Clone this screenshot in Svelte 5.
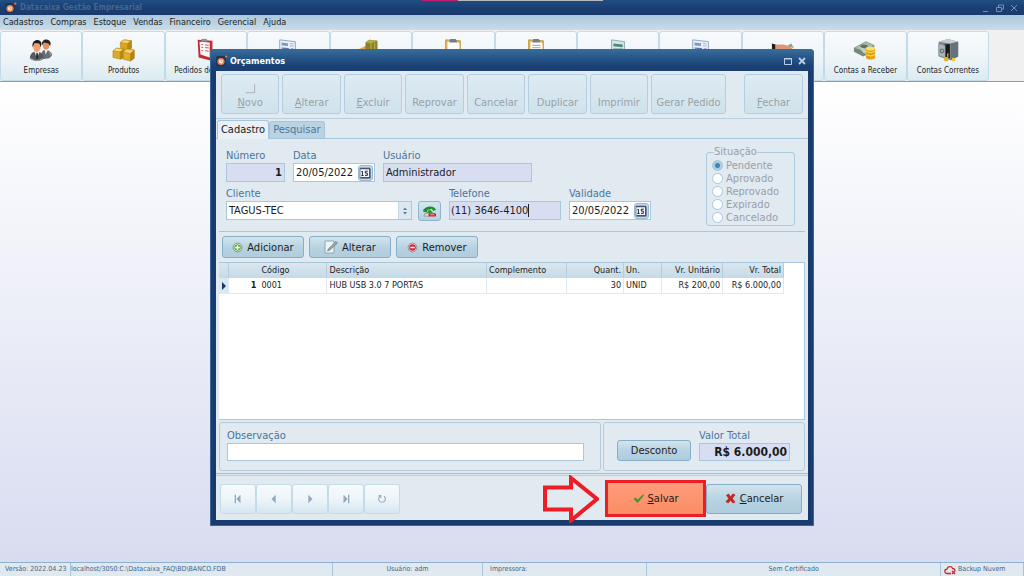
<script lang="ts">
	type Shortcut = { label: string; icon: string; covered?: boolean };

	const menus = ['Cadastros', 'Compras', 'Estoque', 'Vendas', 'Financeiro', 'Gerencial', 'Ajuda'];

	const shortcuts: Shortcut[] = [
		{ label: 'Empresas', icon: 'people' },
		{ label: 'Produtos', icon: 'boxes' },
		{ label: 'Pedidos de Venda', icon: 'redclip' },
		{ label: 'Orçamentos', icon: 'sheet', covered: true },
		{ label: 'Estoque', icon: 'stock', covered: true },
		{ label: 'Compras', icon: 'clip', covered: true },
		{ label: 'Pedidos', icon: 'cliplines', covered: true },
		{ label: 'Notas', icon: 'greensheet', covered: true },
		{ label: 'Relatórios', icon: 'sheet', covered: true },
		{ label: 'Contas a Pagar', icon: 'hand', covered: true },
		{ label: 'Contas a Receber', icon: 'money' },
		{ label: 'Contas Correntes', icon: 'safe' }
	];

	// key = underlined access letter at the start of the caption
	const actions = [
		{ key: 'N', text: 'ovo' },
		{ key: 'A', text: 'lterar' },
		{ key: 'E', text: 'xcluir' },
		{ key: '', text: 'Reprovar' },
		{ key: '', text: 'Cancelar' },
		{ key: '', text: 'Duplicar' },
		{ key: '', text: 'Imprimir' },
		{ key: '', text: 'Gerar Pedido', wide: true }
	];

	const statuses = ['Pendente', 'Aprovado', 'Reprovado', 'Expirado', 'Cancelado'];

	const items = [
		{ n: 1, codigo: '0001', descricao: 'HUB USB 3.0 7 PORTAS', complemento: '', quant: 30, un: 'UNID', unitario: 'R$ 200,00', total: 'R$ 6.000,00' }
	];

	const navButtons = [
		{ label: 'Primeiro', d: 'M2 1h1.6v10H2zM9 1v10L4 6z' },
		{ label: 'Anterior', d: 'M8 1v10L3 6z' },
		{ label: 'Próximo', d: 'M4 1v10l5-5z' },
		{ label: 'Último', d: 'M3 1v10l5-5zM8.400 1H10v10H8.400z' }
	];

	let activeTab = $state('Cadastro');
	let status = $state('Pendente');
	let data = $state('20/05/2022');
	let validade = $state('20/05/2022');
	let telefone = $state('(11) 3646-4100');
	let observacao = $state('');
</script>

{#snippet logo()}
	<svg class="logo" viewBox="0 0 12 12" aria-hidden="true">
		<rect x="0" y="1" width="10" height="10" rx="2" fill="#1c3658" />
		<circle cx="5" cy="6.5" r="3.6" fill="#ef8050" />
		<circle cx="5" cy="6.5" r="2" fill="#fff3ea" />
		<path d="M5 5v1.6h1.2" stroke="#e0703c" stroke-width=".7" fill="none" />
		<circle cx="10.2" cy="1.6" r="1.2" fill="#f07028" />
	</svg>
{/snippet}

{#snippet calendar()}
	<button class="cal" aria-label="Abrir calendário">
		<svg viewBox="0 0 12 12" aria-hidden="true">
			<path d="M1 1h10v10H1z" fill="#f6f8ff" stroke="#7d86a0" />
			<path d="M1 1h10v1.200H1zM10 2h1.500v9.500H10zM1.500 10h10v1.500h-10z" fill="#4a5272" />
			<path d="M3.400 4.200v4.200M2.400 8.500h2.200M2.400 4.600h1M8.800 4.200H6.300v1.900h2v2.300H6" fill="none" stroke="#20242e" />
		</svg>
	</button>
{/snippet}

{#snippet icon(name: string)}
	<svg class="icon" viewBox="0 0 26 26" aria-hidden="true">
		{#if name === 'people'}
			<path d="M13 20c0-5 2-7 5-7s7 2 7 6l-3 3-8 1z" fill="#6a6d73" />
			<path d="M17 13l1 5 2.500-5z" fill="#eee" />
			<ellipse cx="18.500" cy="7.500" rx="3.500" ry="5" fill="#e8905c" />
			<path d="M14 8c-1-8 9-8 9.500-2l-.6 3-1.700-3-5-1z" fill="#26221f" />
			<path d="M1 22c0-5 3-7 7-7s8 2 8 7c-3 4-12 4-15 0z" fill="#55585f" />
			<path d="M6 15l2.500 7 3-7z" fill="#f4f4f4" />
			<path d="M8 16h1.400l.6 5-1.300 2-1-2z" fill="#222" />
			<ellipse cx="8.500" cy="9.500" rx="4" ry="5.700" fill="#f0a070" />
			<path d="M4 10C2 1 13 0 13.500 6l-.7 4-1.600-4-5.200-.7z" fill="#1f1c1a" />
			<path d="M2 22q6 5 13 0M22 15l2 4" stroke="#a4a8ae" fill="none" />
		{:else if name === 'boxes'}
			<g stroke="#a87a10" stroke-width=".5">
				<path d="M9 5l4-3 8 1v8l-4 2-8-1z" fill="#d9a520" />
				<path d="M9 5l8 1 4-3-8-1z" fill="#f6d468" />
				<path d="M17 6v7l4-2V3z" fill="#bd8712" />
				<path d="M1 14l4-3 8 1v9l-4 2-8-2z" fill="#dcaa25" />
				<path d="M1 14l8 1 4-3-8-1z" fill="#f8db78" />
				<path d="M9 15v8l4-2v-9z" fill="#bd8712" />
				<path d="M12 15l4-3 8 1v9l-4 3-8-2z" fill="#dfae2a" />
				<path d="M12 15l8 2 4-4-8-1z" fill="#f6d468" />
				<path d="M20 17v8l4-3v-9z" fill="#b98310" />
			</g>
		{:else if name === 'redclip'}
			<path d="M4 2l16 1v22L5 21z" fill="#c22b35" />
			<path d="M6 4l11 1v16L7 18z" fill="#fbf7f7" />
			<path d="M8 7l2 0m2 .5l4 .3M8 10l2 .3m2 0l4 .5M8 13.500l2 .3m2 0l4 .5" stroke="#b8505a" />
			<path d="M8 1h6v3H8z" fill="#8a8f98" />
		{:else if name === 'sheet'}
			<path d="M4 2l17 2v20H4z" fill="#e9f0f8" stroke="#8da3bd" />
			<path d="M6 5l7 .8v3L6 8z" fill="#7b9bc8" />
			<path d="M15 6l4 .5M15 8.500l4 .3" stroke="#9db2cc" />
			<path d="M6 11l8 .5M16 12h3M6 14h13M6 17h13" stroke="#5877a8" stroke-width="1.500" />
		{:else if name === 'stock'}
			<path d="M0 12l8-4v12z" fill="#e5a24a" />
			<path d="M7 5l4-3 9 1v18l-8 2-5-3z" fill="#8b8128" />
			<path d="M7 5l6 1 7-3-9-1z" fill="#b3aa50" />
			<path d="M13 6v16M17 5v16" stroke="#c4b850" />
			<path d="M20 12l5 2v6h-5z" fill="#d99236" />
		{:else if name === 'clip' || name === 'cliplines'}
			<path d="M5 2l16 1v21H5z" fill="#e0b34e" stroke="#c79a3c" />
			<path d="M7 4h11l2 2v16H7z" fill="#fff" />
			<path d="M10 1h6l2 4H9z" fill="#777e88" />
			{#if name === 'cliplines'}
				<path d="M9 8h9M9 10.500h9M9 13h9" stroke="#9aa1aa" />
			{/if}
		{:else if name === 'greensheet'}
			<path d="M6 2l14 2v20H6z" fill="#d7e6ea" stroke="#8ba5ad" />
			<path d="M8 6l10 1v3L8 9z" fill="#4b857c" />
			<path d="M8 12h10M8 15h10" stroke="#3f7f73" />
		{:else if name === 'hand'}
			<path d="M1 6l4 1v7H1z" fill="#201d1c" />
			<path d="M5 7l8 0 8 2 4 5-6-1-14 1z" fill="#d99778" />
			<path d="M18 8l4-2 3 5z" fill="#8aa583" />
		{:else if name === 'money'}
			<path d="M1 11l13-7 9 4v6l-12 6-10-5z" fill="#75897c" />
			<path d="M1 11l13-7 9 4-12 6z" fill="#aabbac" stroke="#64776b" stroke-width=".5" />
			<ellipse cx="12" cy="9" rx="4" ry="2" fill="#5c7464" />
			<path d="M6 9l9 4v5l-4-2z" fill="#c6d0c4" />
			<path d="M14 12h10v9c0 3-10 3-10 0z" fill="#e0a210" />
			<ellipse cx="19" cy="11.500" rx="5" ry="2.300" fill="#fbe067" />
			<path d="M14 14.500q5 3 10 0M14 18q5 3 10 0" stroke="#fce46e" fill="none" />
		{:else}
			<path d="M3 4l10-3 11 3v16l-8 4-13-4z" fill="#7d888e" />
			<path d="M3 4l10-3 11 3-8 2z" fill="#c3ccd0" />
			<path d="M16 6l8-2v16l-8 4z" fill="#66727a" />
			<path d="M9 7l6-.5V22l-6-2z" fill="#16181a" />
			<path d="M3 6l7 2v14l-7-3z" fill="#aab5ba" stroke="#6a757b" stroke-width=".6" />
			<circle cx="6.500" cy="14" r="2" fill="none" stroke="#505a60" />
			<circle cx="11" cy="23" r="2.500" fill="#eab420" />
			<circle cx="19" cy="23.500" r="2" fill="#f4c93c" />
			<path d="M12 17l1.500-1v5H12z" fill="#d7a321" />
		{/if}
	</svg>
{/snippet}

<div class="app">
	<header class="titlebar">
		{@render logo()}
		<span class="app-title">Datacaixa Gestão Empresarial</span>
		<div class="win-controls">
			<button aria-label="Minimizar"><svg viewBox="0 0 10 10"><path d="M2 8.500h5" /></svg></button>
			<button aria-label="Restaurar"><svg viewBox="0 0 10 10"><path d="M3.500 4V2h5v4H7M1.500 4.500h5v4h-5z" /></svg></button>
			<button aria-label="Fechar programa"><svg viewBox="0 0 10 10"><path d="M2 2l6 6M8 2L2 8" /></svg></button>
		</div>
	</header>

	<nav class="menubar">
		{#each menus as menu}
			<button>{menu}</button>
		{/each}
	</nav>

	<div class="shortcuts">
		{#each shortcuts as s}
			<button class="shortcut" aria-label={s.label}>
				{@render icon(s.icon)}
				{#if !s.covered}<span>{s.label}</span>{/if}
			</button>
		{/each}
	</div>

	<main class="desktop"></main>

	<footer class="statusbar">
		<span class="version">Versão: 2022.04.23</span>
		<span class="path">localhost/3050:C:\Datacaixa_FAQ\BD\BANCO.FDB</span>
		<span class="user">Usuário: adm</span>
		<span class="printer">Impressora:</span>
		<span class="cert">Sem Certificado</span>
		<span class="backup">
			<svg viewBox="0 0 12 10" aria-hidden="true">
				<path d="M7 8.500H3a2.200 2.200 0 0 1 0-4.400 3 3 0 0 1 5.700-.6 2.300 2.300 0 0 1 2.300 2.500" />
				<path d="M8 6l3 3M11 6L8 9" />
			</svg>
			Backup Nuvem
		</span>
	</footer>

	<section class="dialog" aria-label="Orçamentos">
		<header class="dialog-title">
			{@render logo()}
			<h1>Orçamentos</h1>
			<div class="win-controls">
				<button aria-label="Maximizar janela"><svg viewBox="0 0 10 10"><path d="M1.500 2.500h7v6h-7zM1 3h8" /></svg></button>
				<button aria-label="Fechar janela"><svg viewBox="0 0 10 10"><path d="M2 2l6 6M8 2L2 8" stroke-width="1.800" /></svg></button>
			</div>
		</header>

		<div class="dialog-body">
			<div class="actions">
				<div class="action-group">
					{#each actions as a}
						<button disabled class:wide={a.wide}>
							{#if a.text === 'ovo'}
								<svg class="page" viewBox="0 0 12 12" aria-hidden="true"><path d="M10.500 1v9.500H1" /></svg>
							{/if}
							<span><u>{a.key}</u>{a.text}</span>
						</button>
					{/each}
				</div>
				<button disabled class="close"><span><u>F</u>echar</span></button>
			</div>

			<div class="tabs" role="tablist">
				{#each ['Cadastro', 'Pesquisar'] as tab}
					<button role="tab" aria-selected={activeTab === tab} class:active={activeTab === tab} onclick={() => (activeTab = tab)}>{tab}</button>
				{/each}
			</div>

			<div class="page-body">
				<div class="form">
					<div class="fields">
						<div class="row">
							<div class="field numero">
								<label for="numero">Número</label>
								<input id="numero" class="locked bold" value="1" readonly />
							</div>
							<div class="field date">
								<label for="data">Data</label>
								<div class="combo">
									<input id="data" bind:value={data} />
									{@render calendar()}
								</div>
							</div>
							<div class="field usuario">
								<label for="usuario">Usuário</label>
								<input id="usuario" class="locked" value="Administrador" readonly />
							</div>
						</div>
						<div class="row">
							<div class="field cliente">
								<label for="cliente">Cliente</label>
								<div class="combo">
									<select id="cliente">
										<option>TAGUS-TEC</option>
									</select>
									<span class="spin" aria-hidden="true">
										<svg viewBox="0 0 6 8"><path d="M1 3l2-2.500L5 3zM1 5l2 2.500L5 5z" /></svg>
									</span>
								</div>
							</div>
							<button class="phone" aria-label="Ligar para o cliente">
								<svg viewBox="0 0 16 14" aria-hidden="true">
									<path d="M1 7c0-5 11-8 14-2l-3 1.500L10.500 4 6 5 5 8z" fill="#1f8c2c" />
									<path d="M8 4l4 4.500H5z" fill="#2f9c38" />
									<path d="M3 9h5v3H2z" fill="#d7dde0" stroke="#69777d" stroke-width=".6" />
									<rect x="7" y="9" width="8" height="3.500" rx="1" fill="#d3262c" />
									<path d="M9 10.500h4" stroke="#ffc0c0" stroke-width=".8" />
								</svg>
							</button>
							<div class="field telefone">
								<label for="telefone">Telefone</label>
								<div class="combo locked">
									<input id="telefone" bind:value={telefone} />
									<i class="caret"></i>
								</div>
							</div>
							<div class="field date">
								<label for="validade">Validade</label>
								<div class="combo">
									<input id="validade" bind:value={validade} />
									{@render calendar()}
								</div>
							</div>
						</div>
					</div>

					<fieldset class="situacao" disabled>
						<legend>Situação</legend>
						{#each statuses as s}
							<label><input type="radio" name="situacao" value={s} bind:group={status} />{s}</label>
						{/each}
					</fieldset>
				</div>

				<div class="detail">
					<div class="item-actions">
						<button class="btn">
							<svg viewBox="0 0 12 12" aria-hidden="true">
								<circle cx="6" cy="6" r="4.800" fill="#eef7ea" stroke="#7a8a80" />
								<circle cx="6" cy="6" r="3.600" fill="#5fa851" />
								<path d="M6 3.500v5M3.500 6h5" stroke="#fff" stroke-width="1.500" />
							</svg>
							Adicionar
						</button>
						<button class="btn">
							<svg class="pencil" viewBox="0 0 14 14" aria-hidden="true">
								<path d="M1 1h9v12H1z" fill="#eef3f6" stroke="#91a4b0" />
								<path d="M12 1.500l1.500 1.500L6 10l-2.500 1L4.600 8.600z" fill="#9ba5aa" stroke="#6e7a80" stroke-width=".7" />
							</svg>
							Alterar
						</button>
						<button class="btn">
							<svg viewBox="0 0 12 12" aria-hidden="true">
								<circle cx="6" cy="6" r="4.800" fill="#f5dfe2" stroke="#92858c" />
								<circle cx="6" cy="6" r="3.600" fill="#cf2438" />
								<path d="M3.700 6h4.600" stroke="#fff" stroke-width="1.700" />
							</svg>
							Remover
						</button>
					</div>

					<div class="grid">
						<table>
							<colgroup>
								<col class="c-mark" /><col class="c-n" /><col class="c-cod" /><col class="c-desc" /><col class="c-comp" />
								<col class="c-qt" /><col class="c-un" /><col class="c-unit" /><col class="c-tot" />
							</colgroup>
							<thead>
								<tr>
									<th></th>
									<th class="open"></th>
									<th>Código</th>
									<th>Descrição</th>
									<th>Complemento</th>
									<th class="num">Quant.</th>
									<th>Un.</th>
									<th class="num">Vr. Unitário</th>
									<th class="num">Vr. Total</th>
								</tr>
							</thead>
							<tbody>
								{#each items as item}
									<tr>
										<td class="mark"><svg viewBox="0 0 5 8" aria-hidden="true"><path d="M1 0v8l4-4z" /></svg></td>
										<td class="num bold open">{item.n}</td>
										<td>{item.codigo}</td>
										<td>{item.descricao}</td>
										<td>{item.complemento}</td>
										<td class="num">{item.quant}</td>
										<td>{item.un}</td>
										<td class="num">{item.unitario}</td>
										<td class="num">{item.total}</td>
									</tr>
								{/each}
							</tbody>
						</table>
					</div>

					<div class="totals">
						<div class="panel obs">
							<div class="field">
								<label for="observacao">Observação</label>
								<input id="observacao" bind:value={observacao} />
							</div>
						</div>
						<div class="panel sum">
							<button class="btn">Desconto</button>
							<div class="field valor">
								<label for="total">Valor Total</label>
								<input id="total" class="locked bold" value="R$ 6.000,00" readonly />
							</div>
						</div>
					</div>
				</div>
			</div>

			<footer class="footer">
				<div class="nav">
					{#each navButtons as b}
						<button aria-label={b.label}><svg viewBox="0 0 12 12"><path d={b.d} /></svg></button>
					{/each}
					<button aria-label="Atualizar">
						<svg class="refresh" viewBox="0 0 12 12"><path d="M4 2.500a4 4 0 1 0 4.500.3M1.800 2h2.700v2.700" /></svg>
					</button>
				</div>
				<svg class="arrow" viewBox="0 0 56 48" aria-hidden="true">
					<path d="M2 12.500h26V3l26 21-26 21.500V34.500H2z" />
				</svg>
				<button class="btn save">
					<svg viewBox="0 0 12 12" aria-hidden="true"><path d="M1 6.500l2-1 2 2L11 2l.5.8L5 10.500z" fill="#2fa52c" stroke="#1e7d22" stroke-width=".5" /></svg>
					<span><u>S</u>alvar</span>
				</button>
				<button class="btn cancel">
					<svg viewBox="0 0 12 12" aria-hidden="true"><path d="M1.500 2.500L4 1l2 3 2.500-3L11 2 8 6l3 4-2.500 1L6 8l-2.500 3L1 9.500 4 6z" fill="#d81e10" stroke="#a3140c" stroke-width=".5" /></svg>
					<span><u>C</u>ancelar</span>
				</button>
			</footer>
		</div>
	</section>
</div>

<style>
	:global(body) {
		background: #fff;
	}
	.app {
		position: relative;
		display: flex;
		flex-direction: column;
		min-height: 100vh;
		overflow: hidden;
		font-family: Tahoma, 'DejaVu Sans Condensed', 'DejaVu Sans', sans-serif;
		font-size: 11px;
		color: #1c1c1c;
	}
	button,
	input,
	select {
		box-sizing: border-box;
		margin: 0;
		padding: 0;
		border: 0;
		border-radius: 0;
		background: none;
		font: inherit;
		color: inherit;
		outline: none;
	}
	.bold {
		font-weight: 700;
	}

	/* main window */
	.titlebar {
		display: flex;
		align-items: center;
		height: 15px;
		padding: 0 5px;
		background:
			linear-gradient(#c02070, #c02070) 422px 0 / 36px 1px no-repeat,
			linear-gradient(#b4b8bc, #b4b8bc) 458px 0 / 145px 1px no-repeat,
			linear-gradient(#204f83, #1b3f74 50%, #1a3a6c);
	}
	.logo {
		flex: none;
		width: 12px;
		height: 12px;
	}
	.app-title {
		margin-left: 3px;
		font-size: 8px;
		font-weight: 700;
		line-height: 14px;
		color: #43678f;
	}
	.win-controls {
		display: flex;
		gap: 4px;
		margin-left: auto;
	}
	.win-controls button {
		display: flex;
	}
	.win-controls svg {
		width: 10px;
		height: 10px;
		fill: none;
		stroke: #7391b2;
	}
	.menubar {
		display: flex;
		gap: 7px;
		height: 15px;
		padding: 0 3px;
		background: linear-gradient(#acc8de, #c9dce8);
	}
	.menubar button {
		font-size: 9px;
		line-height: 15px;
	}
	.shortcuts {
		display: flex;
		height: 50px;
		padding: 1px 35px 0 0;
		background: #f0f0f0;
		border-bottom: 1px solid #9a9a9a;
	}
	.shortcut {
		display: flex;
		flex: 1 1 0;
		flex-direction: column;
		align-items: center;
		gap: 3px;
		padding-top: 6px;
		min-width: 0;
		background: linear-gradient(#f8fafc, #eff5f8 50%, #dcebf2);
		border: 1px solid #c3dbe8;
		border-radius: 3px;
		font-size: 8px;
		line-height: 12px;
		white-space: nowrap;
	}
	.icon {
		width: 24px;
		height: 24px;
	}
	.desktop {
		flex: 1;
		background: linear-gradient(#fff, #d8dcf0);
	}
	.statusbar {
		display: flex;
		height: 13px;
		border-top: 1px solid #8db0cc;
		background: #e0e9f0;
		font-size: 7px;
		line-height: 13px;
		color: #41658c;
	}
	.statusbar > span {
		box-sizing: border-box;
		overflow: hidden;
		border-right: 1px solid #a9c3d8;
		white-space: nowrap;
	}
	.version {
		width: 71px;
		padding-left: 5px;
	}
	.path {
		flex: 262;
	}
	.user {
		flex: 150;
		text-align: center;
	}
	.printer {
		flex: 157;
		padding-left: 7px;
	}
	.cert {
		flex: 294;
		text-align: center;
	}
	.backup {
		display: flex;
		align-items: center;
		gap: 2px;
		width: 83px;
		padding-left: 3px;
	}
	.backup svg {
		width: 12px;
		height: 10px;
		fill: none;
		stroke: #d0222a;
		stroke-width: 1.3;
	}

	/* child window */
	.dialog {
		position: absolute;
		top: 49px;
		left: 0;
		right: 0;
		box-sizing: border-box;
		width: 59%;
		margin: 0 auto;
		padding: 0 5px 5px;
		background: #193c6e;
		border: 1px solid #3d6796;
		border-radius: 3px 3px 0 0;
	}
	.dialog-title {
		display: flex;
		align-items: center;
		height: 21px;
		margin: 0 -5px;
		padding: 0 6px 0 5px;
		background: linear-gradient(#386b98, #27578a 35%, #1b3f72 80%);
	}
	.dialog-title h1 {
		margin: 0 0 0 2px;
		font-size: 9px;
		font-weight: 700;
		line-height: 14px;
		color: #fff;
	}
	.dialog-title .win-controls svg {
		stroke: #b6cfe4;
	}
	.dialog-body {
		background: #e1e9f1;
	}
	.actions {
		display: flex;
		justify-content: space-between;
		gap: 18px;
		padding: 3px 5px 4px;
		border-bottom: 1px solid #b9cfdf;
	}
	.action-group {
		display: flex;
		flex: 1;
		gap: 3px;
	}
	.actions button {
		display: flex;
		flex: 1;
		flex-direction: column;
		align-items: center;
		justify-content: flex-end;
		height: 40px;
		padding-bottom: 3px;
		background: linear-gradient(#deebf2, #cfe2ec);
		border: 1px solid #b3cfe1;
		border-radius: 3px;
		line-height: 14px;
		color: #9aa1a6;
		white-space: nowrap;
	}
	.actions .wide {
		flex: 0 0 75px;
	}
	.actions .close {
		flex: 0 0 59px;
	}
	.page {
		width: 11px;
		height: 11px;
		margin-bottom: 2px;
		fill: none;
		stroke: #a9aeb2;
	}
	.tabs {
		display: flex;
		align-items: flex-end;
		height: 19px;
		padding-left: 1px;
		border-bottom: 1px solid #a7c6da;
	}
	.tabs button {
		height: 17px;
		padding: 0 3px;
		background: #b9d3e2;
		border: 1px solid #a7c6da;
		border-bottom: 0;
		border-radius: 3px 3px 0 0;
		line-height: 16px;
		color: #4a789e;
	}
	.tabs .active {
		height: 19px;
		margin-bottom: -1px;
		background: #e9f0f6;
		color: #1c1c1c;
	}
	.page-body {
		padding: 6px 3px 2px;
		border-bottom: 1px solid #9dbdd3;
	}
	.form {
		display: flex;
		align-items: flex-start;
		justify-content: space-between;
		padding: 0 10px 5px 7px;
	}
	.fields {
		display: flex;
		flex-direction: column;
		gap: 5px;
		padding-top: 4px;
	}
	.row {
		display: flex;
		align-items: flex-end;
		gap: 8px;
	}
	.field {
		display: flex;
		flex-direction: column;
	}
	.field label {
		line-height: 14px;
		color: #4a759c;
	}
	.field > input,
	.combo {
		box-sizing: border-box;
		width: 100%;
		height: 19px;
		border: 1px solid #a9c8dc;
		background: #fff;
	}
	.field > input {
		padding: 0 2px;
	}
	.field > input.locked,
	.combo.locked {
		background: #d8def1;
	}
	.combo {
		display: flex;
		align-items: center;
	}
	.combo input {
		flex: 1;
		min-width: 0;
		padding-left: 2px;
	}
	.numero {
		width: 59px;
	}
	.numero input,
	.valor input {
		text-align: right;
	}
	.date {
		width: 82px;
	}
	.usuario {
		width: 149px;
	}
	.cliente {
		width: 186px;
	}
	.telefone {
		width: 112px;
	}
	.telefone input {
		field-sizing: content;
		flex: none;
		padding-left: 1px;
	}
	.caret {
		width: 1px;
		height: 13px;
		background: #222;
	}
	.cal {
		display: flex;
		align-items: center;
		justify-content: center;
		width: 15px;
		height: 16px;
		margin-right: 1px;
		background: #c3dae7;
		border: 1px solid #94b9d0;
		border-radius: 3px;
	}
	.cal svg {
		flex: none;
		width: 12px;
		height: 12px;
	}
	select {
		flex: 1;
		height: 17px;
		padding-left: 2px;
		appearance: none;
	}
	.spin {
		display: flex;
		align-items: center;
		justify-content: center;
		width: 12px;
		height: 17px;
		background: #dbe8f0;
		border-left: 1px solid #c3d9e6;
		pointer-events: none;
	}
	.spin svg {
		width: 6px;
		height: 8px;
		fill: #557f9f;
	}
	.phone {
		display: flex;
		align-items: center;
		justify-content: center;
		width: 23px;
		height: 20px;
		margin: 0 0 -1px -2px;
		background: linear-gradient(#d6e6ef, #b5d1e0);
		border: 1px solid #8fb4cb;
		border-radius: 3px;
	}
	.phone svg {
		width: 15px;
		height: 13px;
	}
	.situacao {
		box-sizing: border-box;
		width: 89px;
		margin: 0;
		padding: 0 5px 1px;
		border: 1px solid #aecadd;
		border-radius: 3px;
		color: #99a0a6;
	}
	.situacao legend {
		margin-left: 2px;
		padding: 0;
		line-height: 14px;
	}
	.situacao label {
		display: flex;
		align-items: center;
		gap: 3px;
		line-height: 13px;
	}
	.situacao input {
		width: 11px;
		height: 11px;
		appearance: none;
		background: #fff;
		border: 1px solid #a5c7dc;
		border-radius: 50%;
	}
	.situacao input:checked {
		background: radial-gradient(circle, #3f84b4 0 2px, #a9cfe3 3px);
	}
	.detail {
		border-top: 1px solid #a9c6da;
	}
	.item-actions {
		display: flex;
		gap: 5px;
		padding: 4px 3px;
	}
	.btn {
		display: flex;
		align-items: center;
		justify-content: center;
		gap: 4px;
		background: linear-gradient(#d3e4ed, #b8d3e2 50%, #afcddd);
		border: 1px solid #86aec8;
		border-radius: 3px;
		white-space: nowrap;
	}
	.btn svg {
		width: 11px;
		height: 11px;
	}
	.btn .pencil {
		width: 14px;
		height: 14px;
	}
	.item-actions .btn {
		width: 82px;
		height: 22px;
	}
	.grid {
		height: 156px;
		background: #fff;
		border: 1px solid #a9c6da;
		border-left-width: 0;
		overflow: hidden;
		font-size: 9px;
	}
	table {
		width: calc(100% - 20px);
		table-layout: fixed;
		border-collapse: collapse;
	}
	.c-mark {
		width: 10px;
	}
	.c-n {
		width: 30px;
	}
	.c-cod {
		width: 68px;
	}
	.c-comp {
		width: 80px;
	}
	.c-qt {
		width: 57px;
	}
	.c-un {
		width: 38px;
	}
	.c-unit {
		width: 61px;
	}
	.c-tot {
		width: 61px;
	}
	th,
	td {
		height: 15px;
		padding: 0 2px;
		text-align: left;
		line-height: 15px;
		white-space: nowrap;
	}
	thead tr {
		background: linear-gradient(#dbe7ef, #c4dae6);
	}
	th {
		font-weight: 400;
		border-right: 1px solid #b6cfdf;
	}
	td {
		border-right: 1px solid #dfeaf2;
		border-bottom: 1px solid #dfeaf2;
	}
	.open {
		border-right-color: transparent;
	}
	.num {
		text-align: right;
	}
	.mark {
		background: #dce8f0;
	}
	.mark svg {
		display: block;
		width: 5px;
		height: 8px;
		fill: #143a6c;
	}
	.totals {
		display: flex;
		gap: 2px;
		padding-top: 2px;
	}
	.panel {
		box-sizing: border-box;
		display: flex;
		align-items: flex-end;
		height: 49px;
		border: 1px solid #b2ccdd;
		border-radius: 3px;
	}
	.panel .field input {
		height: 18px;
	}
	.obs {
		flex: 1;
		padding: 0 16px 9px 7px;
	}
	.obs .field {
		flex: 1;
	}
	.sum {
		gap: 8px;
		width: 202px;
		padding: 0 14px 9px 13px;
	}
	.sum .btn {
		flex: none;
		width: 74px;
		height: 21px;
	}
	.valor {
		flex: 1;
		min-width: 0;
	}
	.valor input {
		font-size: 12px;
	}
	.footer {
		display: flex;
		align-items: center;
		margin-top: 1px;
		padding: 4px 6px 3px 4px;
		border-top: 1px solid #b5cddd;
	}
	.nav {
		display: flex;
		margin-right: auto;
	}
	.nav button {
		display: flex;
		align-items: center;
		justify-content: center;
		width: 36px;
		height: 30px;
		background: linear-gradient(#f7fafc, #eef5f9 50%, #d5e7f0);
		border: 1px solid #c4dbe8;
		border-radius: 3px;
	}
	.nav svg {
		width: 10px;
		height: 10px;
		fill: #93a8bf;
	}
	.nav .refresh {
		fill: none;
		stroke: #9aafc4;
		stroke-width: 1.4;
	}
	.arrow {
		width: 56px;
		height: 48px;
		margin: -6px 6px -6px 0;
		fill: none;
		stroke: #ee1c25;
		stroke-width: 4;
	}
	.footer .save {
		width: 101px;
		height: 37px;
		background: linear-gradient(#ff9c7c, #f98d62);
		border: 3px solid #ee1c25;
		border-radius: 0;
	}
	.footer .cancel {
		width: 96px;
		height: 30px;
	}
</style>
